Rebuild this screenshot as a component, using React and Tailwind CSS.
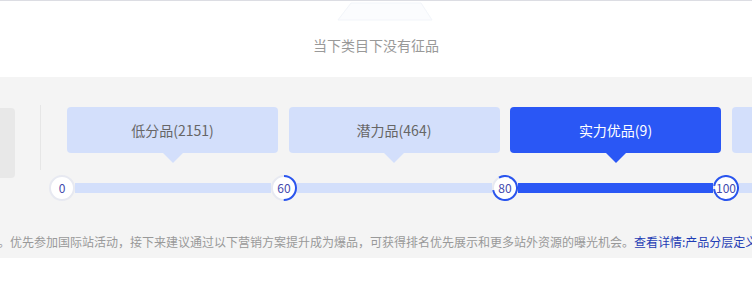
import React from 'react';

const font = { fontFamily: '"Noto Sans CJK SC", "Noto Sans", sans-serif' };

const tiers = [
    { label: '低分品(2151)', active: false },
    { label: '潜力品(464)', active: false },
    { label: '实力优品(9)', active: true },
    { label: '明星品(0)', active: false },
];

const marks = [
    { v: '0', frac: 0, start: -90 },
    { v: '60', frac: 0.5, start: -90 },
    { v: '80', frac: 0.8, start: -120 },
    { v: '100', frac: 0.95, start: -170 },
];

function Mark({ v, frac, start }) {
    const c = 2 * Math.PI * 12;
    return (
        <div className="relative w-[26px] h-[26px] shrink-0 flex items-center justify-center">
            <svg width="26" height="26" viewBox="0 0 26 26" className="absolute inset-0">
                <circle cx="13" cy="13" r="12" fill="#ffffff" stroke="#e7e9f1" strokeWidth="2" />
                {frac > 0 && (
                    <circle
                        cx="13" cy="13" r="12" fill="none" stroke="#2a55ee" strokeWidth="2"
                        strokeDasharray={`${frac * c} ${c}`}
                        transform={`rotate(${start} 13 13)`}
                    />
                )}
            </svg>
            <span className="relative text-[12px] leading-none text-[#4349ad]">{v}</span>
        </div>
    );
}

export default function App() {
    return (
        <div className="w-[752px] h-[301px] overflow-hidden bg-white" style={font}>
            {/* empty state */}
            <div className="h-[77px] border-t border-[#dcdde3] relative">
                <svg width="96" height="20" viewBox="0 0 96 20" className="absolute left-[337px] top-[1px]">
                    <polygon points="14,1 84,1 95,18 1,18" fill="#fbfcfe" stroke="#f2f5fa" strokeWidth="1" />
                </svg>
                <div className="pt-[34px] text-center text-[14px] leading-[20px] text-[#999999]">当下类目下没有征品</div>
            </div>

            {/* tiers */}
            <div className="h-[181px] bg-[#f4f4f4] overflow-hidden pt-[28px]">
                <div className="h-[58px] flex items-start">
                    <div className="w-[15px] h-[70px] mt-[3px] bg-[#e8e8e8] rounded-r-[4px] shrink-0" />
                    <div className="w-px h-[65px] ml-[25px] bg-[#e6e6e6] shrink-0" />
                    <div className="ml-[26px] mt-[2px] flex gap-[10.5px] shrink-0">
                        {tiers.map(t => (
                            <div key={t.label} className="w-[211px] shrink-0 flex flex-col items-center">
                                <div className={`w-full h-[46px] rounded-[4px] flex items-center justify-center text-[14px] ${t.active ? 'bg-[#2a57f5] text-white' : 'bg-[#d3dffb] text-[#666666]'}`}>
                                    {t.label}
                                </div>
                                <div className={`w-0 h-0 border-l-[10px] border-r-[10px] border-t-[10px] border-l-transparent border-r-transparent ${t.active ? 'border-t-[#2a57f5]' : 'border-t-[#d3dffb]'}`} />
                            </div>
                        ))}
                    </div>
                </div>

                <div className="mt-[12px] ml-[49px] flex items-center">
                    <Mark {...marks[0]} />
                    <div className="w-[196px] h-[10px] bg-[#d3dffb] shrink-0" />
                    <Mark {...marks[1]} />
                    <div className="w-[195px] h-[10px] bg-[#d3dffb] shrink-0" />
                    <Mark {...marks[2]} />
                    <div className="w-[195px] h-[10px] bg-[#2a57f5] shrink-0" />
                    <Mark {...marks[3]} />
                    <div className="w-[40px] h-[10px] bg-[#d3dffb] shrink-0" />
                </div>

                <div className="mt-[31px] h-[20px] ml-[-2px] whitespace-nowrap text-[12px] leading-[20px] text-[#999999]">
                    。优先参加国际站活动，接下来建议通过以下营销方案提升成为爆品，可获得排名优先展示和更多站外资源的曝光机会。<span className="text-[#1f3db5]">查看详情:产品分层定义</span>
                </div>
            </div>
        </div>
    );
}
